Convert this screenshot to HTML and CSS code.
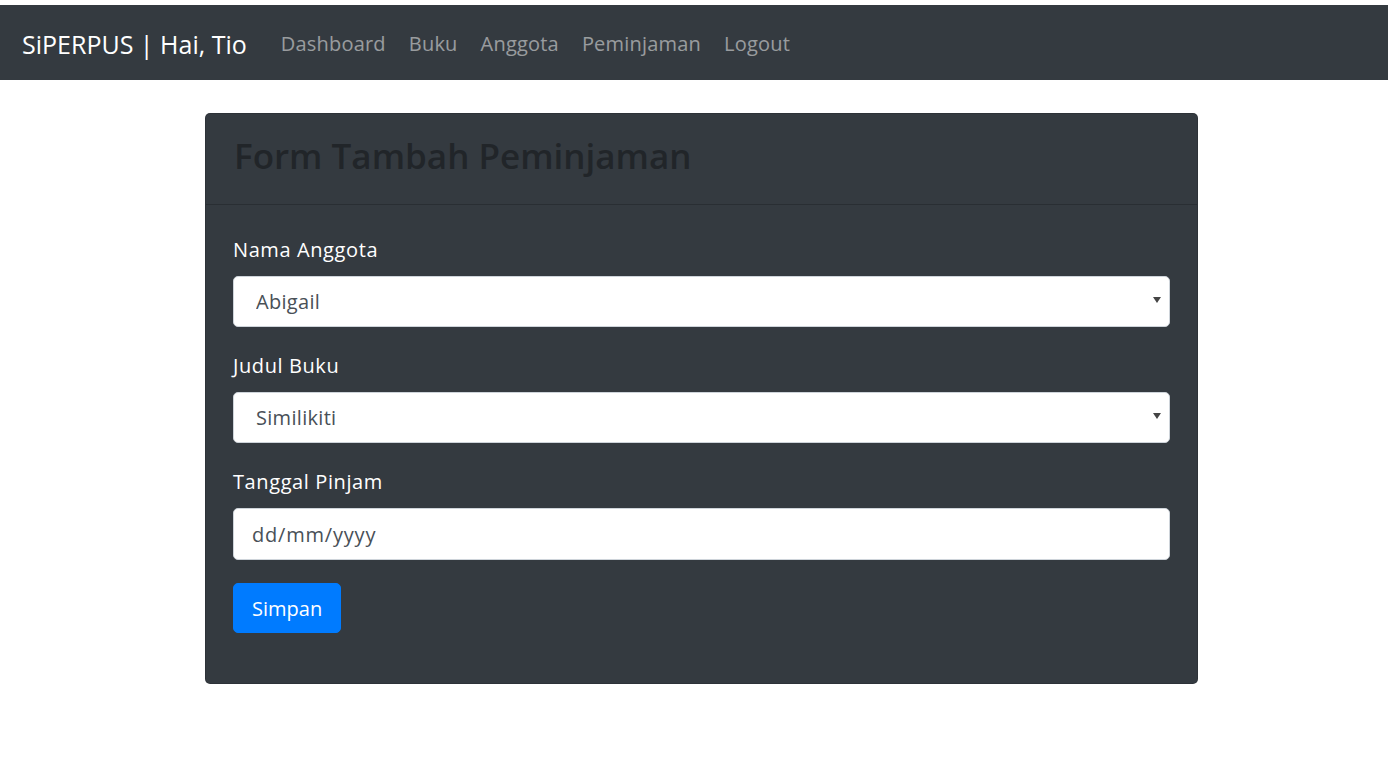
FILE: index.html
```html
<!DOCTYPE html>
<html lang="id">
<head>
<meta charset="utf-8">
<title>SiPERPUS</title>
<link rel="stylesheet" href="styles.css">
</head>
<body>
<nav class="navbar">
  <a class="brand" href="#">SiPERPUS | Hai, Tio</a>
  <ul class="nav">
    <li><a href="#">Dashboard</a></li>
    <li><a href="#">Buku</a></li>
    <li><a href="#">Anggota</a></li>
    <li><a href="#">Peminjaman</a></li>
    <li><a href="#">Logout</a></li>
  </ul>
</nav>
<main class="main">
  <section class="card">
    <header class="card-header">
      <h1 class="title">Form Tambah Peminjaman</h1>
    </header>
    <form class="card-body">
      <div class="group">
        <label class="label" for="anggota">Nama Anggota</label>
        <div class="select-wrap">
          <select id="anggota" class="control select"><option>Abigail</option></select>
        </div>
      </div>
      <div class="group">
        <label class="label" for="buku">Judul Buku</label>
        <div class="select-wrap">
          <select id="buku" class="control select"><option>Similikiti</option></select>
        </div>
      </div>
      <div class="group">
        <label class="label" for="tanggal">Tanggal Pinjam</label>
        <input id="tanggal" class="control input" type="text" placeholder="dd/mm/yyyy">
      </div>
      <div class="group group-last">
        <button class="btn" type="button">Simpan</button>
      </div>
    </form>
  </section>
</main>
</body>
</html>
```
FILE: styles.css
```css
* { box-sizing: border-box; }
html, body { margin: 0; padding: 0; background: #fff; }
body {
  font-family: "Open Sans", "Noto Sans", sans-serif;
  color: #212529;
  padding-top: 5px;
}
.navbar {
  background: #343a40;
  height: 75px;
  display: flex;
  align-items: center;
  padding: 2px 20px 0 22px;
}
.brand {
  color: #fff;
  font-size: 25px;
  text-decoration: none;
  margin-right: 22px;
  white-space: nowrap;
}
.nav {
  list-style: none;
  margin: 0;
  padding: 0;
  display: flex;
}
.nav a {
  display: block;
  padding: 10px 11px 10px 12px;
  font-size: 20px;
  letter-spacing: 0.2px;
  color: rgba(255,255,255,.5);
  text-decoration: none;
}
.main {
  padding: 33px 0 40px 205px;
}
.card {
  width: 993px;
  background: #343a40;
  border-radius: 5px;
  border: 1px solid rgba(0,0,0,.125);
}
.card-header {
  height: 91px;
  border-bottom: 1px solid rgba(0,0,0,.2);
  padding: 0 28px 7px;
  display: flex;
  align-items: center;
}
.title {
  margin: 0;
  font-size: 35px;
  font-weight: 600;
  letter-spacing: 0;
  color: #212529;
  line-height: 1.2;
}
.card-body {
  padding: 30px 27px 26px;
  display: flex;
  flex-direction: column;
  gap: 24px;
}
.group {
  display: flex;
  flex-direction: column;
  align-items: flex-start;
}
.group-last { margin-top: -1px; margin-bottom: 24px; }
.label {
  color: #fff;
  font-size: 20px;
  line-height: 30px;
  letter-spacing: 0.6px;
  margin-bottom: 11px;
}
.select-wrap {
  position: relative;
  width: 100%;
}
.select-wrap::after {
  content: "";
  position: absolute;
  right: 9px;
  top: 21px;
  border-left: 4px solid transparent;
  border-right: 4px solid transparent;
  border-top: 6px solid #444;
  pointer-events: none;
}
.control {
  width: 100%;
  height: 51px;
  font-family: inherit;
  font-size: 20px;
  color: #495057;
  background: #fff;
  border: 1px solid #ced4da;
  border-radius: 5px;
  outline: none;
}
.select {
  -webkit-appearance: none;
  appearance: none;
  padding: 0 19px 0 22px;
  letter-spacing: 0.3px;
}
.input {
  height: 52px;
  padding: 0 18px;
  letter-spacing: 0.8px;
}
.input::placeholder { color: #495057; opacity: 1; }
.btn {
  background: #007bff;
  border: 1px solid #007bff;
  color: #fff;
  font-family: inherit;
  font-size: 20px;
  height: 50px;
  padding: 0 18px;
  border-radius: 5px;
  cursor: pointer;
}
```
